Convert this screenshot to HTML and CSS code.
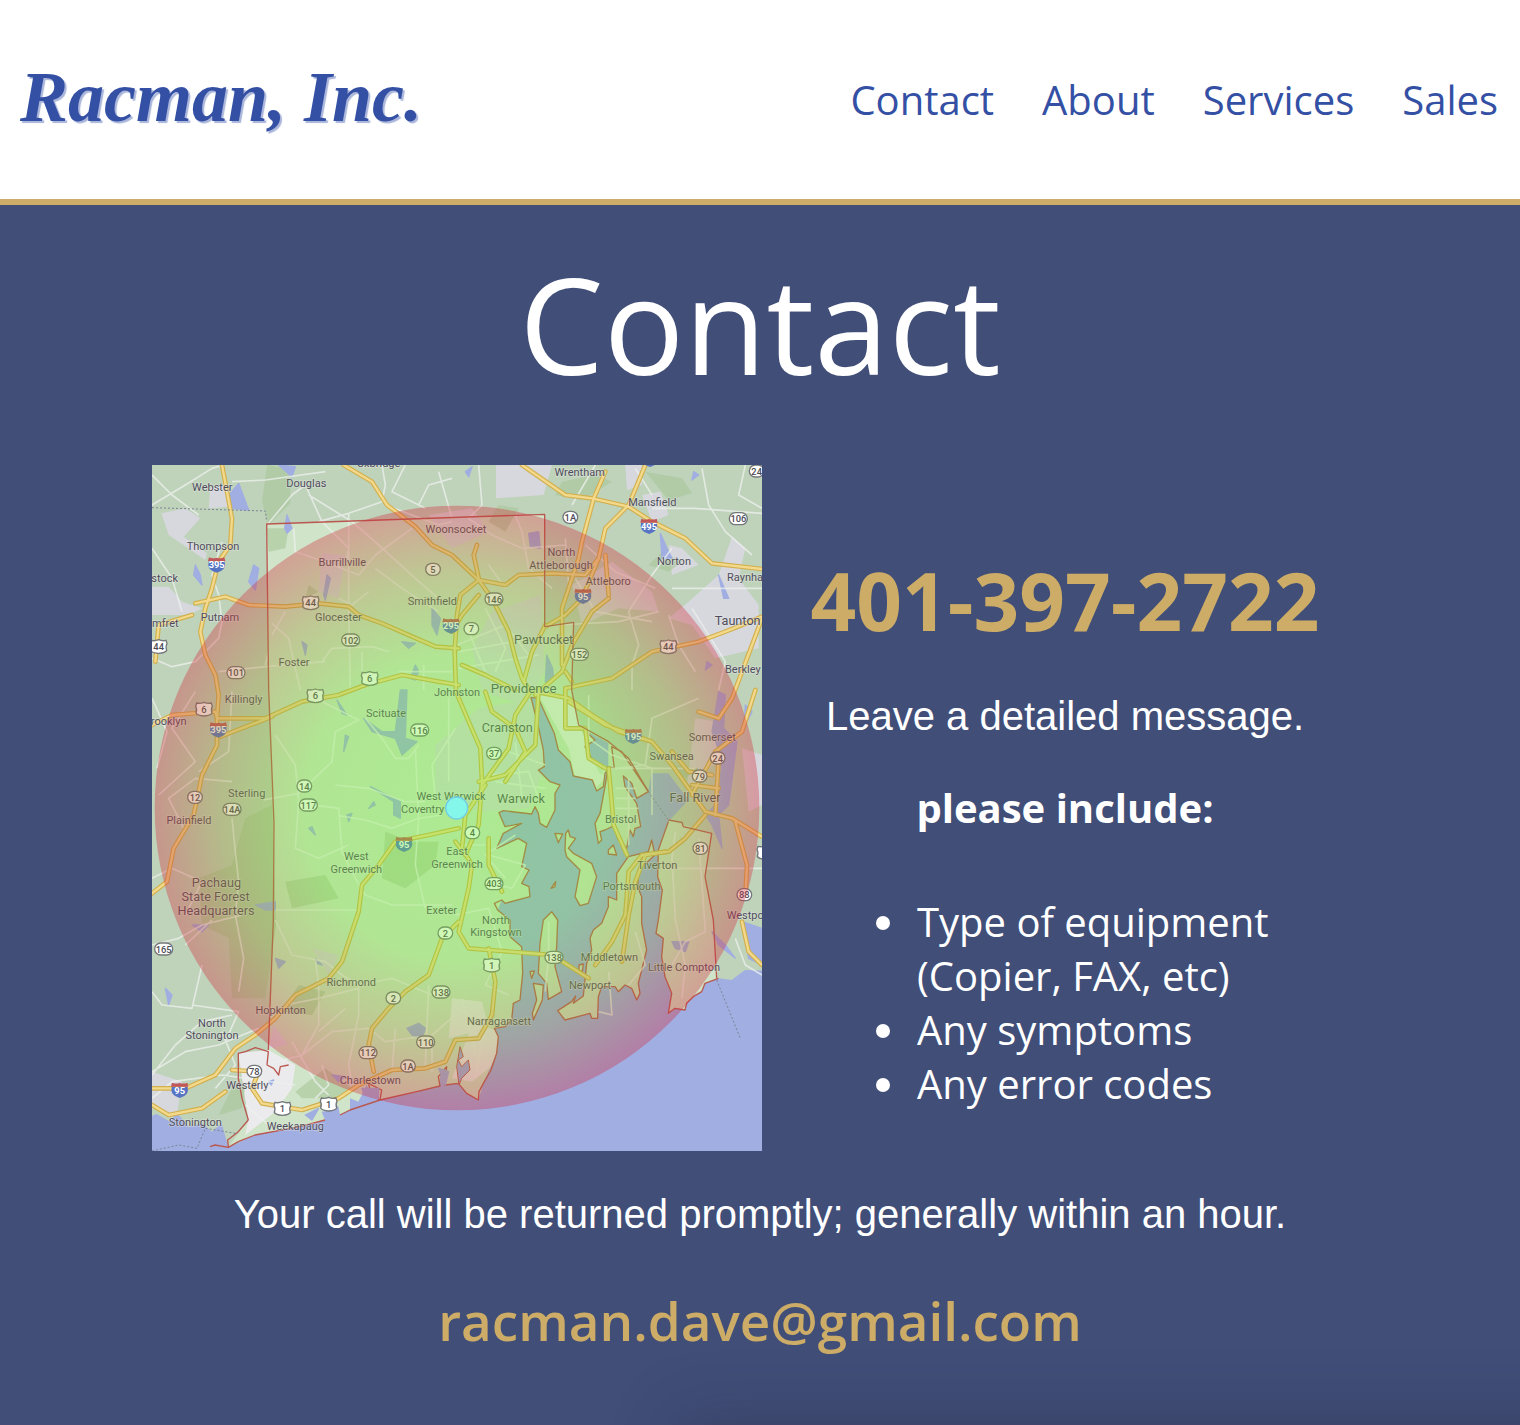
FILE: index.html
```html
<!DOCTYPE html>
<html lang="en">
<head>
<meta charset="utf-8">
<meta name="viewport" content="width=device-width, initial-scale=1">
<title>Racman, Inc. - Contact</title>
<link rel="stylesheet" href="styles.css">
</head>
<body>
<header class="site-header">
  <a class="logo" href="#">Racman, Inc.</a>
  <nav class="site-nav">
    <a href="#contact">Contact</a>
    <a href="#about">About</a>
    <a href="#services">Services</a>
    <a href="#sales">Sales</a>
  </nav>
</header>
<main class="contact" id="contact">
  <h1>Contact</h1>
  <div class="columns">
    <svg class="map" viewBox="0 0 1830 2058" role="img" aria-label="Service area map of Rhode Island">
      <defs>
        <radialGradient id="area">
          <stop offset="0" stop-color="#6cf62d"/>
          <stop offset=".5" stop-color="#78e832"/>
          <stop offset=".78" stop-color="#a09332"/>
          <stop offset="1" stop-color="#d42838"/>
        </radialGradient>
        <g id="interstate"><path class="sh-blue" d="M-24-8Q-30 17 0 25Q30 17 24-8Z"/><path class="sh-red" d="M-26-9L-23-21Q-12-16 0-20Q12-16 23-21L26-9Z"/></g>
        <path id="us" class="sh" d="M-22-18Q-12-15 0-20Q12-15 22-18L25-8Q20 0 24 12Q20 20 0 21Q-20 20-24 12Q-20 0-25-8Z"/>
        <rect id="st" class="sh" x="-22" y="-18" width="44" height="36" rx="18"/>
        <rect id="wide" class="sh" x="-27" y="-18" width="54" height="36" rx="18"/>
      </defs>

      <!-- land, towns and woods -->
      <rect class="land" width="1830" height="2058"/>
      <path class="state" d="M344 177L1178 148V485L1265 472L1259 675L1290 800L1400 850L1489 980L1549 1065L1679 1105L1659 1235L1684 1365L1694 1540L1500 1750L979 1960L229 2045L289 1965L259 1765L349 1755L364 1365L366 1075L350 675Z"/>
      <g class="urban">
        <path d="M28 145L100 130L145 160L95 215L165 265L160 285L50 210ZM175 70L215 60L235 125L170 130ZM0 365L50 365L90 410L150 430L110 450H0ZM1032 0L1200 0L1175 90L1032 100ZM1420 0L1470 0V60L1425 75ZM1470 90L1525 80L1550 150L1500 170ZM1550 240L1590 250L1640 300L1560 330ZM1740 215L1780 250L1760 340L1820 420V550L1690 580L1620 480L1550 460L1610 410L1700 330ZM510 265L580 270L560 400L500 380ZM0 1820L90 1850L75 1950L0 1930Z"/>
        <path d="M1260 360L1380 290L1500 380L1520 440L1400 430L1290 480ZM1020 440L1165 390L1178 620L1120 720L990 680L960 550ZM1630 760L1700 770L1690 890L1600 1000ZM1770 850L1830 870V1020L1790 1040ZM830 150L960 130L1010 200L900 250ZM850 840L980 730L1160 700L1180 900L1130 1030L990 1040L850 1000ZM480 1450L560 1470L530 1530ZM365 1680L410 1740L350 1750Z"/>
      </g>
      <path class="town" d="M259 1765L349 1755L430 1800L420 1870L370 1940L280 2010L289 1960ZM1060 1700L1035 1790L960 1850L900 1840L960 1680ZM900 1600L990 1610L1010 1690L890 1720ZM1160 690L1260 700L1290 800L1340 920L1360 940L1330 970L1270 940L1250 850ZM1380 930L1460 960L1460 1110L1400 1130Z"/>
      <g class="woods">
        <path d="M345 0L415 10L415 115L350 180L330 110ZM345 190L410 190L400 250L350 260ZM1230 50L1330 30L1380 50L1290 105L1210 90ZM1480 20L1590 40L1620 85L1550 105ZM1040 120L1100 130L1060 200L1010 170ZM470 360L500 380L460 400ZM280 1060L360 1020L372 1380L340 1600L240 1600L230 1420L150 1380L140 1240L240 1200ZM700 1100L780 1130L860 1130L850 1200L760 1270L690 1240ZM400 1250L520 1230L560 1300L420 1330ZM1490 300L1530 260L1590 290L1550 320ZM440 1560L520 1580L480 1650L390 1640ZM430 1880L520 1810L600 1870L560 1900L450 1900ZM1560 900L1640 910L1600 940ZM240 1870L280 1860L270 1930L200 1950Z"/>
      </g>

      <!-- bay, ocean and islands -->
      <g transform="translate(909 675)">
        <path class="water" d="M-915 1280L-895 1272L-855 1295L-835 1270L-815 1290L-800 1310L-760 1300L-745 1312L-730 1325L-700 1300L-680 1372L-600 1335L-465 1310L-390 1290L-400 1265L-380 1262L-370 1235L-350 1250L-345 1275L-315 1260L-315 1225L-290 1235L-265 1185L-250 1215L-225 1230L-115 1205L-45 1188L-45 1150L-30 1185L-10 1182L10 1180L35 1210L70 1230L85 1180L125 1090L130 1040L118 1015L150 1010L170 990L175 940L195 930L203 850L200 770L165 740L165 690L128 660L140 630L150 640L225 620L222 590L200 580L222 540L200 530L215 460L190 445L125 475L145 430L200 400L150 410L132 368L145 362L230 372L240 350L250 370L255 400L275 412L300 360L300 310L315 285L285 275L250 240L268 230L265 180L250 110L228 22L250 25L275 80L298 130L310 180L345 215L355 258L412 270L425 303L445 290L450 250L465 235L415 215L390 170L420 150L388 120L460 160L460 230L478 238L470 170L500 185L580 300L590 250L640 250L700 330L640 395L610 480L608 560L622 600L610 690L603 730L625 745L620 800L630 860L650 910L640 970L660 955L690 960L695 940L715 920L740 905L750 880L790 865L830 870L870 840L930 842V1390H-915Z"/>
        <path class="coast" d="M-735 1370L-720 1365L-680 1372L-682 1350L-650 1325L-620 1290M-680 1372L-650 1355L-600 1335L-465 1310L-390 1290M-345 1275L-315 1260L-225 1230L-220 1200L-260 1180L-250 1215L-225 1230L-115 1205L-45 1188L-50 1160L-25 1130L-30 1185L10 1180L35 1210L70 1230L72 1205L85 1180L108 1140L125 1090L130 1040L118 1015L150 1010L170 990L175 940L195 930L203 850L200 770L165 740L165 690L128 660L118 640L140 630L150 640L225 620L222 590L200 580L222 540L200 530L215 460L190 445L125 475L145 430L200 400L150 410L132 368L145 362L230 372L240 350L250 370L255 400L275 412L300 360L300 310L315 285L285 275L250 240L268 230L265 180L250 110L228 22L250 25L275 80L298 130L310 180L345 215L355 258L412 270L425 303L445 290L450 250L465 235L415 215L390 170L420 150L388 120M640 395L610 480L608 560L622 600L610 690L603 730L625 745L620 800L630 860L650 910L640 970L660 955L690 960L695 940L715 920L740 905L750 880L790 865"/>
        <path class="isle" d="M450 290L435 370L420 400L430 460L440 450L435 425L450 420L475 408L490 450L515 475L525 420L535 440L540 415L557 410L545 340L510 290L505 258L530 280L545 325L580 305L500 185L470 170L478 235L460 230ZM520 500L580 485L590 450L600 495L550 540L548 590L560 620L560 700L575 780L550 880L555 910L545 930L530 895L510 885L490 905L480 890L440 890L430 920L428 985L410 985L405 970L330 990L308 962L350 935L362 918L355 940L385 918L395 820L410 780L405 745L415 720L440 700L460 650L460 620L485 630L485 550ZM332 430L340 420L345 440L362 445L340 475L355 490L410 520L425 560L400 640L375 647L360 620L375 540L335 500L330 480ZM265 690L290 665L308 690L305 770L300 830L320 905L280 928L275 880L250 850L255 760ZM235 880L265 885L262 930L235 990L232 970L245 930ZM300 430L323 432L310 458ZM460 480L475 465L485 495L460 492ZM225 845L238 843L230 865ZM372 825L385 822L382 845L372 840ZM288 595L302 575L300 590Z"/>
        <path class="water inlet" d="M15 1070L25 1100L10 1110L20 1130L40 1110L45 1140L20 1165L12 1185L5 1130Z"/>
      </g>
      <g class="pond">
        <path d="M235 85L260 55L275 95L290 135L240 130ZM380 0L430 5L420 35ZM405 150L420 190L405 205L398 190ZM305 300L320 310L310 375L290 350ZM130 300L145 330L150 360L125 330ZM525 330L535 340L520 405L515 390ZM840 430L865 460L855 510L840 480ZM450 530L465 540L460 570ZM790 600L800 620L790 645L775 640ZM750 530L790 535L770 550ZM1130 205L1160 200L1165 250L1135 245ZM1525 205L1545 250L1560 280L1530 280ZM1625 20L1640 30L1620 45ZM940 20L960 5L950 35ZM1700 330L1730 400L1715 400ZM1665 590L1680 600L1660 615ZM1184 570L1202 610L1205 640L1188 660L1180 650Z"/>
        <path d="M635 760L690 800L730 800L745 675L765 675L760 820L795 830L750 870L730 820L660 800ZM555 705L585 750L570 745ZM580 810L590 815L575 860ZM655 965L745 1010L745 1060L725 1050L725 1010ZM650 1030L665 1010L670 1020ZM585 1050L600 1045L590 1070ZM470 1090L480 1085L490 1110ZM310 1320L370 1310L370 1335L340 1335ZM1700 680L1720 690L1715 790L1755 830L1730 1020L1700 1050L1710 1150L1680 1080L1660 1050L1700 1010L1710 880L1680 800ZM1780 720L1800 740L1775 790ZM1560 1430L1610 1430L1600 1460L1570 1450ZM765 1690L800 1675L820 1690L810 1720L780 1710ZM540 1830L580 1835L560 1850ZM630 1870L680 1870L680 1900L640 1900ZM860 1810L890 1820L880 1860ZM490 1480L510 1500L495 1495ZM370 1480L400 1490L380 1510ZM40 1570L60 1590L50 1620ZM120 1380L170 1380L150 1400ZM350 1850L365 1845L358 1860ZM460 1950L500 1930L480 1965ZM1680 1400L1720 1440L1750 1480L1700 1440ZM1770 1370L1830 1390V1500L1790 1480Z"/>
      </g>

      <!-- minor roads -->
      <g class="minor">
        <path d="M0 120L100 60L180 10L215 0M0 30L60 90L140 150M345 180L420 90L460 60L510 170L540 200L590 250L580 300M690 0L700 60L690 110L590 145L500 170M590 145V420L595 675M470 90L600 170L680 240L790 340L870 410M700 120L860 180L900 170M425 190L430 260L520 290L620 330L670 270L780 190M210 230L180 330L200 390L210 470L200 520L130 590L60 605L0 580M360 510L400 440M360 475L410 520L430 610L445 675M510 590L540 550L660 545L710 560M200 620L340 605L520 590M670 310L750 370L860 440M0 250L60 340L90 440M340 600L350 560M800 120L830 60L900 40M760 0L720 80L820 130M860 20L900 160M240 50L340 45L520 20M630 560V675M560 400L600 420L650 380M815 600V675M740 620H900"/>
        <path d="M980 0L990 120L950 160L1020 210L1110 250L1240 240M1090 150L1110 200L1130 310L1200 370M1330 0L1260 120M1500 130L1630 130L1830 145M1450 10L1500 90M1650 10L1670 120L1720 200L1800 270M1560 370H1830M1560 250L1500 330L1430 440L1460 540L1440 600V675M1780 0L1760 90L1830 130M1300 240L1390 320L1510 370M1620 430L1720 590L1700 675M1550 450L1580 540L1630 620M1270 340L1330 440L1500 470M1010 300L1060 370M915 540L1060 480L1130 570M1000 430L1060 550L1030 620M950 500L1000 620M920 560L1140 520M920 610L1160 570M1240 220L1250 360M1220 480L1400 470L1520 440"/>
        <path d="M370 810L430 900L440 1010L430 1150L500 1180L590 1140M335 1005L440 985L540 890L550 800L620 765L490 700M500 1022L560 1030L570 1160L610 1240L640 1290L720 1320H900M560 1052L640 1065L720 1090L800 1060L870 1050M550 960L650 970L760 1010L820 1010M640 760L690 820L730 880L770 880L800 840M370 1335H620M130 680L60 790L130 890L20 990M240 950L130 940L50 1000L100 1100M240 1060L250 1160L260 1250L250 1350L275 1480L260 1580M790 850L800 1060L790 1200L820 1330M890 700V950M910 790L840 900L850 1000M240 680L230 860L140 920M0 700L45 800L15 910M100 1350L150 1250L60 1210L0 1240"/>
        <path d="M1310 690V820L1380 870L1500 910L1500 1050M1370 910H1630M1640 700L1500 760L1480 900L1400 910M1430 940V1140M1390 970H1450M1390 1000H1450M1390 1030H1460M1370 1060H1440M1360 900L1350 940M1530 1210H1830M1570 1100L1560 1180L1570 1365L1600 1500L1590 1600M1640 1120L1660 1400L1600 1430L1560 1500M1010 1170L1120 1200L1080 1270L1000 1250M1090 1110L1000 1170L1060 1240M910 1350L1010 1330L1050 1460L1000 1560L1070 1590M910 1140L1000 1140M1190 1370V1470L1180 1580M1450 1400L1480 1500L1430 1560M1370 1520L1380 1650L1340 1640M1020 930L1130 920L1160 1000M1030 950L1180 970M1090 830L1110 1000M1070 860L1180 900M910 1630L1010 1680L1080 1660M930 1600L980 1800M1000 1680L970 1840"/>
        <path d="M0 1440L80 1420L150 1380L270 1350M0 1580L30 1620L120 1630L150 1500M120 1620L260 1640L220 1730M0 1820L100 1760L200 1740L320 1690M0 1830L70 1740L150 1670L240 1650M100 1440L180 1365M370 1365L420 1470L520 1490L570 1530L620 1560L720 1540L840 1590M490 1480L500 1560L500 1680L450 1770L340 1800L300 1900M450 1770L540 1700L650 1690L700 1730L840 1710L910 1650M620 1560V1650L590 1800L600 1860M580 1630L500 1700M830 1560L820 1800M510 1800L530 1860L490 1900M420 1730L490 1850L530 1890M210 1700L250 1800L190 1870M0 1900L60 1850L210 1830L430 1860M400 1620L500 1600L620 1570M720 1820L730 1690M840 1820L840 1740M1750 1420L1780 1500L1830 1530M280 1920L350 1980"/>
      </g>

      <!-- highways: casing and fill share each route -->
      <g class="route-case"><use href="#routes"/></g>
      <g class="route">
        <g id="routes">
          <path d="M210 0L225 80L240 160L235 240L200 290L180 370L160 430L145 500L160 570L190 630L200 690L195 760L195 840L150 930L125 1050L65 1150L45 1250L0 1285"/>
          <path d="M575 0L660 50L705 120L790 185L840 240L900 270L980 345M980 345L1060 360L1100 330L1200 325L1300 330L1340 280L1360 190L1430 120L1480 0M1110 0L1240 90L1320 100L1430 125L1500 170L1600 220L1680 295L1830 312"/>
          <path d="M130 415L220 395L290 420L400 425L500 415L590 425L620 450L690 475L770 510L850 545L920 550M975 240L965 270L980 340M980 345L925 390L915 450L908 560L912 680L950 770L985 850L990 950L980 1080L940 1170L910 1130"/>
          <path d="M980 345L1020 400L1070 500L1090 580L1110 640L1135 680L1090 750L1070 850L990 960M1180 480L1140 560L1115 650M1340 280L1290 400L1240 450L1180 485M1370 400L1320 440L1260 540L1230 620L1150 690M1360 20L1325 100L1290 230L1280 280L1230 430L1230 600M1360 270L1370 390M1240 620L1260 650M1240 670L1380 640L1500 560L1640 530L1720 500L1770 480L1830 455"/>
          <path d="M0 780L60 750L190 740L195 760L340 760L450 710L560 690L640 660L750 630L860 650L920 660M205 815L360 755M1150 680L1250 700L1320 750L1400 800L1500 830L1560 900L1610 970L1660 1040L1740 1060L1830 1115M1250 710L1360 780L1500 830M1810 675L1770 800L1690 860L1620 990M1560 860L1610 920L1680 930M1700 880L1690 1050M1620 960L1700 970M1750 1070L1785 1200L1780 1300M1660 1050L1600 1120L1550 1160L1470 1170L1430 1220L1420 1350L1380 1430L1330 1500"/>
          <path d="M920 1090L830 1110L730 1130L680 1200L630 1260L620 1340L600 1400L570 1490L530 1540L430 1590L370 1660L310 1710L250 1750L190 1830L100 1870L0 1870M1000 960L940 1050L930 1150L960 1200L950 1270L920 1400L950 1450L1010 1455L1200 1470L1310 1540M1010 1450L1030 1550L1020 1650L980 1720L910 1725L880 1790L820 1810L720 1815L620 1860L560 1900L450 1935L330 1915L300 1870L320 1820L240 1815M0 1920L50 1950L150 1930L220 1880M920 1370L870 1420L830 1530L760 1580L710 1630L660 1690L650 1740L665 1820M1000 680L1020 740L1090 790L1120 860L1060 950M930 600L1000 630L1090 675M900 500L930 450L980 390M1370 910L1385 1080L1425 1170M1540 1160L1480 1170L1450 1250L1430 1350L1410 1490M1640 740L1700 760L1740 700L1830 460M10 590L20 480L120 450M1160 670L1150 840L1060 930L980 950M1010 1120V1200L1050 1280M1240 670V790L1300 790L1310 880L1360 910M1770 1370L1790 1460L1830 1500"/>
        </g>
      </g>

      <!-- state line -->
      <path class="border" d="M289 1965L270 1900L259 1840V1765L280 1760L310 1748L349 1760L345 1800L365 1810L380 1830L385 1805L410 1800M349 1755L364 1365L366 1075L350 675L344 177L1178 148V485L1265 472L1259 675L1280 780L1370 830L1430 880L1489 980M1549 1065L1590 1072L1594 1085L1679 1105L1659 1235L1684 1365L1694 1540"/>
      <path class="dotted" d="M0 128L340 138L344 170M1489 980L1549 1065M1694 1545L1765 1720M0 2058L80 2040L135 2050L160 1990L250 2005"/>

      <!-- place names -->
      <g class="names">
        <text x="181" y="78">Webster</text><text x="463" y="66">Douglas</text><text x="680" y="5">Uxbridge</text><text x="1283" y="32">Wrentham</text><text x="1501" y="123">Mansfield</text>
        <text x="183" y="254">Thompson</text><text x="38" y="350">stock</text><text x="40" y="485">mfret</text><text x="204" y="468">Putnam</text><text x="571" y="302">Burrillville</text><text x="559" y="468">Glocester</text><text x="841" y="420">Smithfield</text><text x="912" y="205">Woonsocket</text>
        <text x="1228" y="274">North</text><text x="1227" y="313">Attleborough</text><text x="1369" y="360">Attleboro</text><text x="1566" y="300">Norton</text><text x="1725" y="348" class="from">Raynha</text>
        <text class="big" x="1175" y="537">Pawtucket</text><text class="big from" x="1688" y="480">Taunton</text><text class="from" x="1719" y="624">Berkley</text><text x="426" y="603">Foster</text><text x="275" y="714">Killingly</text><text x="50" y="779">rooklyn</text><text x="702" y="757">Scituate</text><text x="915" y="692">Johnston</text>
        <text class="city" x="1115" y="684">Providence</text><text class="big" x="1066" y="802">Cranston</text><text class="big" x="1107" y="1014">Warwick</text><text class="big" x="1629" y="1011">Fall River</text><text x="1681" y="828">Somerset</text><text x="1559" y="885">Swansea</text>
        <text x="284" y="995">Sterling</text><text x="111" y="1077">Plainfield</text><text x="897" y="1006">West Warwick</text><text x="812" y="1044">Coventry</text><text x="613" y="1186">West</text><text x="613" y="1224">Greenwich</text><text x="915" y="1171">East</text><text x="915" y="1208">Greenwich</text>
        <text x="1406" y="1074">Bristol</text><text x="1516" y="1211">Tiverton</text><text x="1439" y="1275">Portsmouth</text><text class="big" x="193" y="1267">Pachaug</text><text class="big" x="191" y="1309">State Forest</text><text class="big" x="192" y="1351">Headquarters</text>
        <text x="869" y="1348">Exeter</text><text x="1032" y="1376">North</text><text x="1032" y="1413">Kingstown</text><text x="1372" y="1489">Middletown</text><text x="1596" y="1519">Little Compton</text><text x="1314" y="1572">Newport</text><text class="from" x="1724" y="1361">Westpo</text>
        <text x="598" y="1562">Richmond</text><text x="386" y="1648">Hopkinton</text><text x="180" y="1685">North</text><text x="180" y="1722">Stonington</text><text x="1041" y="1679">Narragansett</text><text x="655" y="1856">Charlestown</text><text x="286" y="1871">Westerly</text><text x="130" y="1982">Stonington</text><text x="430" y="1996">Weekapaug</text>
      </g>

      <!-- route markers -->
      <g class="marks white">
        <use href="#interstate" x="194" y="298"/><text x="194" y="309">395</text>
        <use href="#interstate" x="1491" y="182"/><text x="1491" y="194">495</text>
        <use href="#interstate" x="1494" y="-19"/>
        <use href="#interstate" x="1293" y="392"/><text x="1293" y="404">95</text>
        <use href="#interstate" x="897" y="481"/><text x="897" y="493">295</text>
        <use href="#interstate" x="199" y="793"/><text x="199" y="805">395</text>
        <use href="#interstate" x="1444" y="812"/><text x="1444" y="825">195</text>
        <use href="#interstate" x="756" y="1136"/><text x="756" y="1148">95</text>
        <use href="#interstate" x="83" y="1874"/><text x="83" y="1886">95</text>
      </g>
      <g class="marks">
        <use href="#us" x="476" y="413"/><text x="476" y="424">44</text><use href="#us" x="20" y="544"/><text x="20" y="555">44</text><use href="#us" x="1549" y="545"/><text x="1549" y="556">44</text>
        <use href="#us" x="653" y="640"/><text x="653" y="651">6</text><use href="#us" x="490" y="692"/><text x="490" y="703">6</text><use href="#us" x="156" y="732"/><text x="156" y="743">6</text>
        <use href="#us" x="1019" y="1500"/><text x="1019" y="1511">1</text><use href="#us" x="391" y="1930"/><text x="391" y="1941">1</text><use href="#us" x="530" y="1917"/><text x="530" y="1928">1</text><use href="#us" x="1840" y="1162"/>
        <use href="#st" x="843" y="313"/><text x="843" y="324">5</text><use href="#st" x="1255" y="157"/><text x="1255" y="168">1A</text><use href="#st" x="1814" y="18"/><text x="1814" y="29">24</text><use href="#wide" x="1759" y="161"/><text x="1759" y="172">106</text>
        <use href="#wide" x="1026" y="402"/><text x="1026" y="413">146</text><use href="#st" x="958" y="491"/><text x="958" y="502">7</text><use href="#wide" x="1282" y="568"/><text x="1282" y="579">152</text><use href="#wide" x="596" y="525"/><text x="596" y="536">102</text><use href="#wide" x="252" y="623"/><text x="252" y="634">101</text>
        <use href="#wide" x="803" y="795"/><text x="803" y="806">116</text><use href="#st" x="1026" y="865"/><text x="1026" y="876">37</text><use href="#st" x="457" y="963"/><text x="457" y="974">14</text><use href="#wide" x="469" y="1020"/><text x="469" y="1031">117</text><use href="#st" x="129" y="997"/><text x="129" y="1008">12</text><use href="#wide" x="240" y="1033"/><text x="240" y="1044">14A</text>
        <use href="#st" x="1697" y="879"/><text x="1697" y="890">24</text><use href="#st" x="1643" y="933"/><text x="1643" y="944">79</text><use href="#st" x="1645" y="1150"/><text x="1645" y="1161">81</text><use href="#st" x="1777" y="1289"/><text x="1777" y="1300">88</text><use href="#st" x="961" y="1103"/><text x="961" y="1114">4</text><use href="#wide" x="1026" y="1256"/><text x="1026" y="1267">403</text>
        <use href="#st" x="880" y="1404"/><text x="880" y="1415">2</text><use href="#st" x="724" y="1599"/><text x="724" y="1610">2</text><use href="#wide" x="867" y="1581"/><text x="867" y="1592">138</text><use href="#wide" x="1206" y="1477"/><text x="1206" y="1488">138</text><use href="#wide" x="35" y="1452"/><text x="35" y="1463">165</text><use href="#wide" x="821" y="1731"/><text x="821" y="1742">110</text><use href="#wide" x="648" y="1763"/><text x="648" y="1774">112</text><use href="#st" x="768" y="1803"/><text x="768" y="1814">1A</text><use href="#st" x="307" y="1819"/><text x="307" y="1830">78</text>
      </g>

      <circle class="area" cx="915" cy="1029" r="907"/>
      <circle class="home" cx="914" cy="1029" r="33"/>
    </svg>
    <section class="details">
      <a class="phone" href="tel:401-397-2722">401-397-2722</a>
      <p class="note">Leave a detailed message.</p>
      <h2>please include:</h2>
      <ul>
        <li>Type of equipment (Copier, FAX, etc)</li>
        <li>Any symptoms</li>
        <li>Any error codes</li>
      </ul>
    </section>
  </div>
  <p class="note">Your call will be returned promptly; generally within an hour.</p>
  <a class="email" href="mailto:racman.dave@gmail.com">racman.dave@gmail.com</a>
</main>
</body>
</html>
```
FILE: styles.css
```css
* { box-sizing: border-box; }

body {
  margin: 0;
  min-height: 100vh;
  display: flex;
  flex-direction: column;
  font-family: "Open Sans", sans-serif;
  font-size: 40px;
  line-height: 54px;
  background: #404e78;
}

a { text-decoration: none; }

.site-header {
  display: flex;
  justify-content: space-between;
  align-items: center;
  padding: 70px 22px 70px 20px;
  border-bottom: 6px solid #ccac66;
  background: #fff;
}

.logo {
  padding-bottom: 4px;
  font: italic bold 72px/55px "Liberation Serif", serif;
  color: #3450a5;
  text-shadow: 2px 2px 1px #a9b5da;
}

.site-nav { display: flex; gap: 48px; }
.site-nav a { color: #3450a5; }

.contact {
  position: relative;
  overflow: hidden;
  flex: 1;
  display: flex;
  flex-direction: column;
  align-items: center;
  padding: 28px 0 64px;
  color: #fff;
  text-align: center;
}

/* soft shade along the lower right edge */
.contact::after {
  content: "";
  position: absolute;
  top: 100%;
  left: 45%;
  right: -80px;
  height: 80px;
  box-shadow: 0 0 64px 8px rgba(40, 40, 60, .3);
}

h1 {
  margin: 0;
  font-size: 134px;
  line-height: 180px;
  font-weight: 400;
}

.columns {
  align-self: stretch;
  display: grid;
  grid-template-columns: 610fr 606fr;
  margin: 52px 10% 36px;
}

.map { display: block; width: 100%; height: auto; }

.details {
  display: flex;
  flex-direction: column;
  padding-top: 80px;
}

.phone {
  font-size: 80px;
  line-height: 110px;
  font-weight: 700;
  color: #ccac66;
}

.note {
  margin: 0;
  font-family: "Liberation Sans", sans-serif;
}

.details .note { margin-top: 34px; }

h2 {
  margin: 38px 0 60px;
  font-size: 40px;
  line-height: 54px;
}

ul {
  margin: 0;
  padding-left: 149px;
  text-align: left;
}

li { padding-left: 6px; }

.email {
  margin-top: 42px;
  font-size: 53px;
  line-height: 76px;
  font-weight: 600;
  color: #ccac66;
}

/* map */
.land { fill: #bfd2ba; }
.state { fill: #cfe4c8; }
.urban { fill: #d7d8dd; }
.town { fill: #ebebed; }
.woods { fill: #a8c699; opacity: .6; }
.water, .pond { fill: #a0aee2; }
.pond { stroke: #a0aee2; stroke-width: 4; stroke-linejoin: round; }
.coast, .border { fill: none; stroke: #ba5850; stroke-width: 4; stroke-linejoin: round; }
.isle { fill: #cfe0c6; stroke: #ba5850; stroke-width: 4; stroke-linejoin: round; }
.inlet { stroke: #ba5850; stroke-width: 3; }
.dotted { fill: none; stroke: #7c8494; stroke-width: 3; stroke-dasharray: 6 6; }
.minor { fill: none; stroke: #eef1ee; stroke-width: 5; stroke-linejoin: round; opacity: .75; }
.route-case, .route { fill: none; stroke-linejoin: round; stroke-linecap: round; }
.route-case { stroke: #d2b04e; stroke-width: 14; }
.route { stroke: #f3d98c; stroke-width: 7; }
.names {
  font-family: Roboto, sans-serif;
  font-size: 33px;
  text-anchor: middle;
  fill: #504c5c;
  stroke: #e6ebe6;
  stroke-width: 4;
  stroke-opacity: .5;
  paint-order: stroke;
}
.names .big { font-size: 38px; }
.names .city { font-size: 40px; }
.names .from { text-anchor: start; }
.marks {
  font-family: Roboto, sans-serif;
  font-size: 28px;
  font-weight: 500;
  text-anchor: middle;
  fill: #4c4a55;
}
.marks.white { fill: #fff; font-weight: 700; }
.sh { fill: #fff; stroke: #74777a; stroke-width: 4; }
.sh-blue { fill: #5673c4; }
.sh-red { fill: #c0575a; }
.area { fill: url(#area); opacity: .35; }
.home { fill: #84f6ea; stroke: #72cfe0; stroke-width: 4; }
```
